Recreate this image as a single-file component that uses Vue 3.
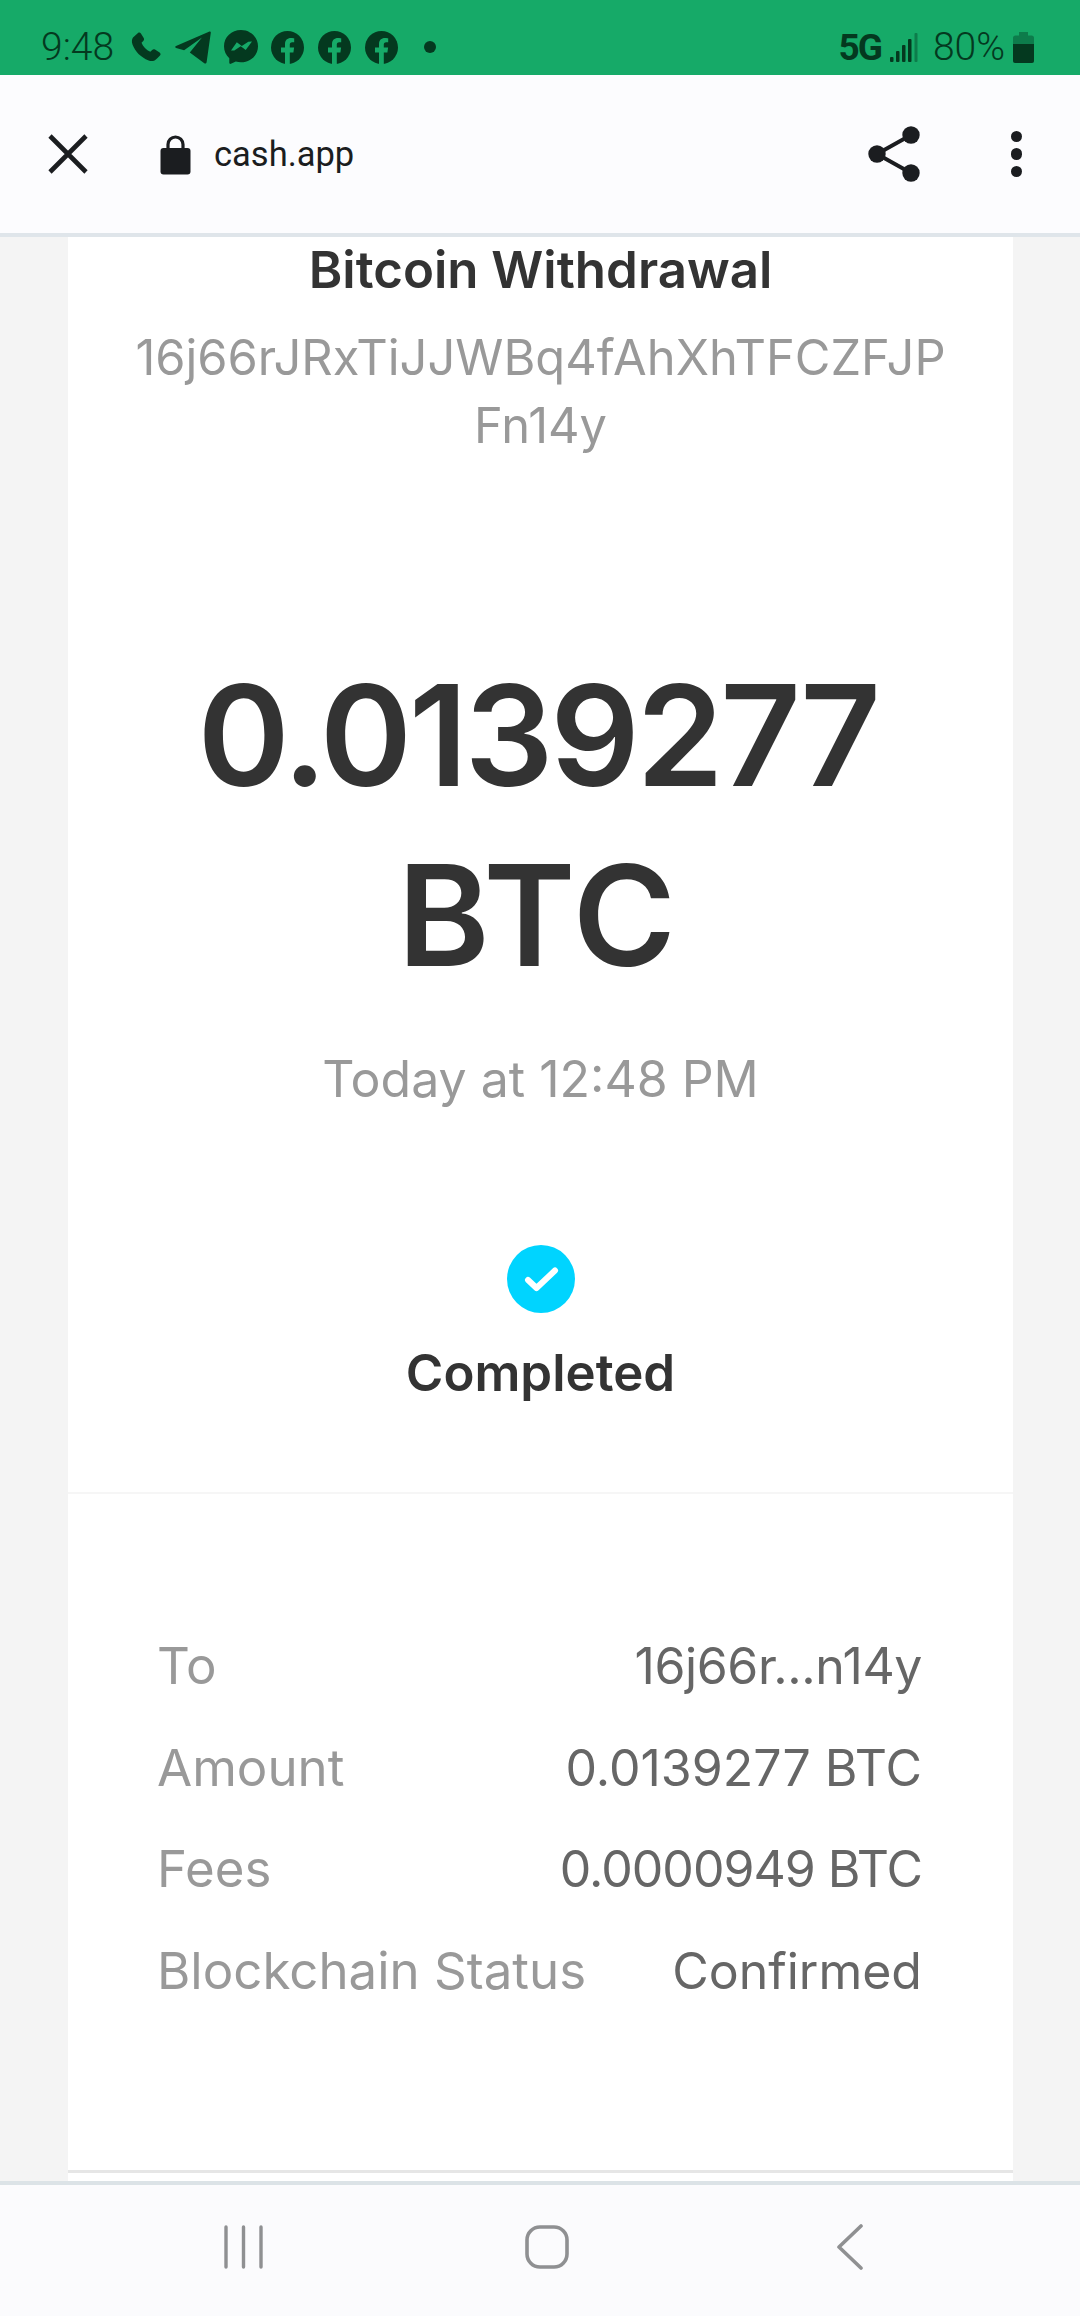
<template>
  <div class="phone">
    <!-- status bar -->
    <div class="status">
      <div class="status-left">
        <span class="time">9:48</span>
        <svg class="ic phone-ic" width="31" height="31" viewBox="0 0 31 31">
          <path d="M2 5.500 7 1c1-.8 2.200-.6 2.900.5l2.800 4.600c.6 1 .4 2-.4 2.800L10.500 10.700c1.400 3.700 4.900 7.300 8.800 9l1.900-1.800c.8-.8 1.900-.9 2.800-.3l4.600 2.900c1.100.7 1.300 2.100.4 3L26 26.500c-2 2.400-5.200 3.200-8.300 2C9.500 25.200 4.200 19.500 1.500 12.500.6 10 .7 7.300 2 5.500Z" fill="#04391f"/>
        </svg>
        <svg class="ic" width="36" height="33" viewBox="0 0 36 33">
          <path d="M34.500 0.500 1 15c-1.200.6-1 1.700.1 2l8 2.200L27 6.500 14.800 21.400l14.500 10.900c1 .6 2 .3 2.300-1L35.800 1.800c.2-1-.4-1.600-1.300-1.300Z" fill="#04391f"/>
        </svg>
        <svg class="ic" width="34" height="34" viewBox="0 0 34 34">
          <path d="M17 0C7.500 0 0 7 0 16.300c0 4.900 2 9.100 5.300 12v4.500c0 .9.800 1.400 1.600 1l4.900-2.200c1.600.5 3.400.7 5.200.7 9.500 0 17-7 17-16S26.500 0 17 0Z" fill="#04391f"/>
          <path d="m7 20.500 5.800-8.300 5 3.700 6.500-4.200 3.700-.2-6.300 8.500-5-3.700-6.400 4.300Z" fill="#16aa68"/>
        </svg>
        <svg v-for="n in 3" :key="n" class="ic fb" width="33" height="33" viewBox="0 0 33 33">
          <circle cx="16.500" cy="16.500" r="16.500" fill="#04391f"/>
          <path d="M14 33V21.500H10v-5h4v-3.400c0-4 2.300-6.200 6-6.200 1.700 0 3.200.3 3.200.3v4h-1.900c-2 0-2.500 1.200-2.500 2.400v2.900h4.300l-.7 5h-3.600V33Z" fill="#16aa68"/>
        </svg>
        <span class="dot"></span>
      </div>
      <div class="status-right">
        <span class="net">5G</span>
        <svg class="signal" width="28" height="29" viewBox="0 0 28 29">
          <rect x="0" y="24" width="3.500" height="5" rx="1" fill="#04391f"/>
          <rect x="6" y="18" width="3.500" height="11" rx="1" fill="#04391f"/>
          <rect x="12" y="12" width="3.500" height="17" rx="1" fill="#04391f"/>
          <rect x="18" y="6" width="3.500" height="23" rx="1" fill="#04391f"/>
          <rect x="24.500" y="0" width="3" height="29" rx="1" fill="#0d7c4b"/>
        </svg>
        <span class="pct">80%</span>
        <svg class="battery" width="21" height="31" viewBox="0 0 21 31">
          <path d="M6 0h9v3.500h3.500A2.500 2.500 0 0 1 21 6v22.500a2.500 2.500 0 0 1-2.500 2.500h-16A2.500 2.500 0 0 1 0 28.500V6a2.500 2.500 0 0 1 2.500-2.500H6Z" fill="#0d7c4b"/>
          <path d="M0 12h21v16.500a2.500 2.500 0 0 1-2.500 2.500h-16A2.500 2.500 0 0 1 0 28.500Z" fill="#04391f"/>
        </svg>
      </div>
    </div>

    <!-- browser toolbar -->
    <div class="toolbar">
      <svg class="close" width="40" height="40" viewBox="0 0 40 40">
        <path d="M2 2 38 38M38 2 2 38" stroke="#1b1d20" stroke-width="4.600" fill="none"/>
      </svg>
      <svg class="lock" width="31" height="41" viewBox="0 0 31 41">
        <path d="M8 16V10.500a7.500 7.500 0 0 1 15 0V16" stroke="#1b1d20" stroke-width="3.200" fill="none"/>
        <rect x="0.500" y="14" width="30" height="26.500" rx="3" fill="#1b1d20"/>
      </svg>
      <span class="url">cash.app</span>
      <svg class="share" width="52" height="56" viewBox="0 0 52 56">
        <path d="M43 9 9 28 43 47" stroke="#1b1d20" stroke-width="4" fill="none"/>
        <circle cx="43" cy="9" r="8.700" fill="#1b1d20"/>
        <circle cx="9" cy="28" r="8.700" fill="#1b1d20"/>
        <circle cx="43" cy="47" r="8.700" fill="#1b1d20"/>
      </svg>
      <div class="kebab"><i></i><i></i><i></i></div>
    </div>

    <!-- page content -->
    <div class="content">
      <div class="card">
        <section class="summary">
          <h2>Bitcoin Withdrawal</h2>
          <p class="address">16j66rJRxTiJJWBq4fAhXhTFCZFJP<br>Fn14y</p>
          <h1>0.0139277<br><span class="unit">BTC</span></h1>
          <p class="date">Today at 12:48 PM</p>
          <svg class="check" width="68" height="68" viewBox="0 0 68 68">
            <circle cx="34" cy="34" r="34" fill="#00d4ff"/>
            <path d="M21 35 l8.500 8 L48 25.500" stroke="#fff" stroke-width="6" stroke-linecap="round" stroke-linejoin="round" fill="none"/>
          </svg>
          <h3>Completed</h3>
        </section>
        <section class="details">
          <div v-for="row in rows" :key="row.label" class="row">
            <span class="label">{{ row.label }}</span>
            <span class="value" :class="row.fit">{{ row.value }}</span>
          </div>
        </section>
        <div class="end-line"></div>
      </div>
    </div>

    <!-- system navigation -->
    <div class="nav">
      <svg width="39" height="44" viewBox="0 0 39 44">
        <path d="M2 2V42M19.500 2V42M37 2V42" stroke="#8f9092" stroke-width="3.400" stroke-linecap="round" fill="none"/>
      </svg>
      <svg width="44" height="44" viewBox="0 0 44 44">
        <rect x="2" y="2" width="40" height="40" rx="13" stroke="#8f9092" stroke-width="3.600" fill="none"/>
      </svg>
      <svg width="26" height="46" viewBox="0 0 26 46">
        <path d="M24 2 2 23 24 44" stroke="#8f9092" stroke-width="3.600" stroke-linecap="round" stroke-linejoin="round" fill="none"/>
      </svg>
    </div>
  </div>
</template>

<script setup>
const rows = [
  { label: 'To', value: '16j66r...n14y', fit: 'snug' },
  { label: 'Amount', value: '0.0139277 BTC' },
  { label: 'Fees', value: '0.0000949 BTC', fit: 'tight' },
  { label: 'Blockchain Status', value: 'Confirmed' }
]
</script>

<style scoped>
.phone {
  width: 1080px;
  height: 2316px;
  display: flex;
  flex-direction: column;
  overflow: hidden;
  background: #f4f4f4;
  font-family: Inter, "Liberation Sans", sans-serif;
}

.status {
  height: 75px;
  flex: none;
  background: #16aa68;
  display: flex;
  align-items: flex-start;
  justify-content: space-between;
  padding: 30px 46px 0 41px;
  box-sizing: border-box;
  color: #04391f;
  font-family: Roboto, sans-serif;
}

.status-left,
.status-right {
  display: flex;
  align-items: center;
  height: 34px;
}

.time {
  font-size: 39px;
  font-weight: 300;
  width: 90px;
}

.ic {
  margin-right: 13px;
}

.fb {
  margin-right: 14px;
}

.dot {
  width: 12px;
  height: 12px;
  border-radius: 50%;
  background: #04391f;
  margin-left: 12px;
}

.net {
  font-size: 37px;
  font-weight: 700;
  letter-spacing: -2px;
  margin-right: 9px;
}

.pct {
  font-size: 39px;
  font-weight: 300;
  margin: 0 8px 0 15px;
}

.toolbar {
  height: 162px;
  flex: none;
  box-sizing: border-box;
  background: #fcfcfe;
  border-bottom: 4px solid #dfe5ea;
  display: flex;
  align-items: center;
  padding-left: 48px;
  padding-right: 58px;
}

.close {
  margin-right: 72px;
}

.url {
  font-family: Roboto, sans-serif;
  font-size: 34.500px;
  color: #1b1d20;
  margin-left: 23px;
  flex: 1;
}

.share {
  margin-right: 91px;
}

.kebab {
  display: flex;
  flex-direction: column;
  gap: 6px;
}

.kebab i {
  display: block;
  width: 11.500px;
  height: 11.500px;
  border-radius: 50%;
  background: #1b1d20;
}

.content {
  flex: 1;
  min-height: 0;
  overflow: hidden;
  padding: 0 67px 0 68px;
}

.card {
  background: #fff;
  height: 100%;
  text-align: center;
}

.summary {
  height: 1257px;
  box-sizing: border-box;
  border-bottom: 2px solid #f6f6f6;
  padding-top: 3px;
}

h1, h2, h3, p {
  margin: 0;
}

h2 {
  font-size: 51px;
  font-weight: 600;
  line-height: 60px;
  color: #333;
}

.address {
  margin-top: 24px;
  font-size: 48.800px;
  line-height: 68px;
  color: #999;
}

h1 {
  margin-top: 185px;
  padding-right: 6px;
  font-size: 140px;
  font-weight: 600;
  letter-spacing: -3.400px;
  line-height: 180px;
  color: #333;
}

.unit {
  letter-spacing: 1.500px;
}

.date {
  margin-top: 44px;
  font-size: 50px;
  line-height: 60px;
  color: #999;
}

.check {
  display: block;
  margin: 136px auto 0;
}

h3 {
  margin-top: 30px;
  font-size: 51px;
  font-weight: 600;
  line-height: 60px;
  color: #333;
}

.details {
  height: 676px;
  box-sizing: border-box;
  padding: 142px 91px 0 89px;
}

.row {
  display: flex;
  justify-content: space-between;
  height: 101.500px;
  line-height: 60px;
}

.label {
  font-size: 51px;
  color: #999;
}

.value {
  font-size: 50px;
  color: #666;
}

.value.snug {
  letter-spacing: -0.400px;
}

.value.tight {
  letter-spacing: -1px;
}

.end-line {
  height: 3px;
  background: #e6e6e6;
}

.nav {
  height: 135px;
  flex: none;
  box-sizing: border-box;
  border-top: 4px solid #dce3e7;
  background: #fbfbfd;
  display: grid;
  grid-template-columns: 224px 39px 262px 44px 268px 26px;
  align-items: center;
  padding-bottom: 8px;
}

.nav svg:nth-child(1) { grid-column: 2; }
.nav svg:nth-child(2) { grid-column: 4; }
.nav svg:nth-child(3) { grid-column: 6; }
</style>

<style>
html, body {
  margin: 0;
  background: #f4f4f4;
}
</style>
